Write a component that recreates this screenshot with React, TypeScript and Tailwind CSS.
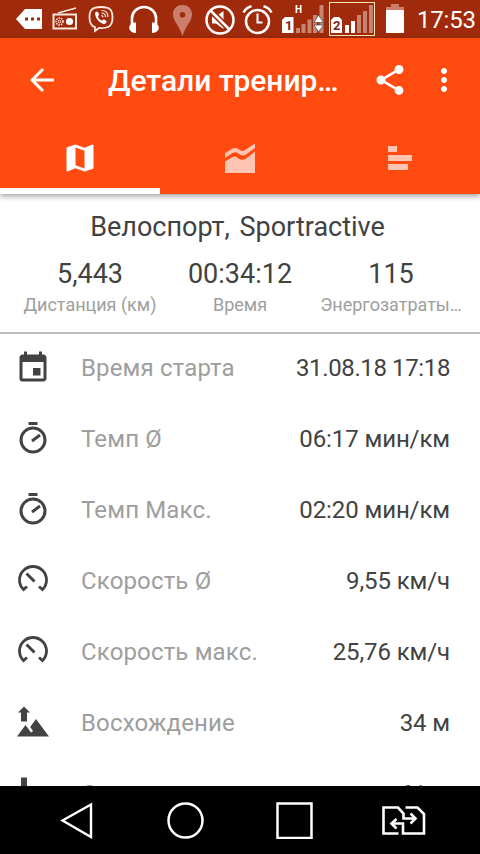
import type { ReactNode } from "react";
import { MdArrowBack, MdEvent, MdMap, MdMoreVert, MdShare } from "react-icons/md";

type Stat = { icon: ReactNode; label: string; value: string; tight?: boolean };

function StopwatchIcon() {
    return (
        <svg width="36" height="36" viewBox="0 0 36 36" fill="none" stroke="#424242">
            <circle cx="18" cy="19" r="12" strokeWidth="3" />
            <path d="M13.5 2.500H22.5" strokeWidth="3" />
            <path d="M17 20L25 14" strokeWidth="3" />
        </svg>
    );
}

function GaugeIcon() {
    return (
        <svg width="36" height="36" viewBox="0 0 36 36" fill="none" stroke="#424242" strokeWidth="2.8">
            <path d="M12 23.500L8.500 26.600A13.500 13.500 0 1 1 27.500 26.600L24 23.500" />
            <path d="M11.500 10.500L19.500 18.500" strokeWidth="3" />
        </svg>
    );
}

function AscentIcon() {
    return (
        <svg width="36" height="36" viewBox="0 0 36 36" fill="#424242">
            <path d="M9 1.500L15 7.500H12V16.500H6V7.500H3Z" />
            <path d="M2 31.500L10.500 20L16 27.500L18 26L15.200 22L21 14L34 31.500Z" />
        </svg>
    );
}

function DescentIcon() {
    return (
        <svg width="36" height="36" viewBox="0 0 36 36" fill="#424242">
            <path d="M9 17L3 11H6V1.500H12V11H15Z" />
            <path d="M2 31.500L10.500 20L16 27.500L18 26L15.200 22L21 14L34 31.500Z" />
        </svg>
    );
}

const stats: Stat[] = [
    { icon: <MdEvent size={36} />, label: "Время старта", value: "31.08.18 17:18", tight: true },
    { icon: <StopwatchIcon />, label: "Темп Ø", value: "06:17 мин/км" },
    { icon: <StopwatchIcon />, label: "Темп Макс.", value: "02:20 мин/км" },
    { icon: <GaugeIcon />, label: "Скорость Ø", value: "9,55 км/ч" },
    { icon: <GaugeIcon />, label: "Скорость макс.", value: "25,76 км/ч" },
    { icon: <AscentIcon />, label: "Восхождение", value: "34 м" },
    { icon: <DescentIcon />, label: "Спуск", value: "61 м" },
];

const summary = [
    { value: "5,443", label: "Дистанция (км)" },
    { value: "00:34:12", label: "Время" },
    { value: "115", label: "Энергозатраты…" },
];

function StatusBar() {
    return (
        <div className="flex h-[38px] shrink-0 items-center bg-[#9f2b0c] pl-4 text-white">
            <svg width="26" height="38" viewBox="0 0 26 38" fill="#fff">
                <path d="M0 19L9 9H26V29H9Z" />
                <path d="M9 17.500h3v3h-3zM15 17.500h3v3h-3zM21 17.500h3v3h-3z" fill="#9f2b0c" />
            </svg>
            <svg className="ml-2.5" width="26" height="38" viewBox="0 0 26 38" fill="none" stroke="#ffe9dc">
                <rect x="1.500" y="14.500" width="22.500" height="14" strokeWidth="2" />
                <path d="M6 13L24 8" strokeWidth="1.500" />
                <circle cx="17.500" cy="21.500" r="3.600" fill="#fff" stroke="none" />
                <circle cx="7.500" cy="21.500" r="3.500" strokeWidth="1.500" strokeDasharray="1.500 1" />
                <circle cx="7.500" cy="21.500" r="1.300" strokeWidth="1" />
            </svg>
            <svg className="ml-2.5" width="26" height="38" viewBox="0 0 26 38" fill="none" stroke="#ffe9dc">
                <path d="M13 7C4 7 1.500 10 1.500 17.500C1.500 23 3 26 7 27.200V31L11 28C21 28.500 24.500 26 24.500 17.500C24.500 10 22 7 13 7Z" strokeWidth="1.800" />
                <path d="M7 13C8 11 9.500 11 10.500 13C11.500 15 10.500 15.500 10 16.500C10.500 18.500 12 20 14 20.500C15.500 18.500 17 19.500 18.500 21C19 22.500 17 24.500 15.500 24C11 22.500 7 18 7 13Z" fill="#fff" stroke="none" />
                <path d="M13.500 10.500C17.500 10.500 20 13 20 17M13.500 13C16 13 17.500 14.500 17.500 17M13.500 15.300L15.300 17" strokeWidth="1.200" />
            </svg>
            <svg className="ml-[15px]" width="30" height="38" viewBox="0 0 30 38" fill="none" stroke="#fff">
                <path d="M3 25V18A12 11 0 0 1 27 18V25" strokeWidth="2.600" />
                <path d="M7 22.500V33C-2 33-2 22.500 7 22.500ZM23 22.500V33C32 33 32 22.500 23 22.500Z" fill="#fff" stroke="none" />
            </svg>
            <svg className="ml-[14px]" width="20" height="38" viewBox="0 0 20 38" fill="#cb7f6b">
                <path fillRule="evenodd" d="M9.500 5C3 5 0 9.500 0 14.500C0 21 6 25 9.500 36C13 25 19 21 19 14.500C19 9.500 16 5 9.500 5ZM9.500 12A2.800 2.800 0 1 1 9.500 17.600A2.800 2.800 0 1 1 9.500 12Z" />
            </svg>
            <svg className="ml-[11px]" width="32" height="38" viewBox="0 0 32 38" fill="none" stroke="#fff">
                <path d="M8 16.500H12L19.500 11V29L12 23.500H8Z" fill="#fff" stroke="none" />
                <path d="M6 10L26 30" stroke="#9f2b0c" strokeWidth="6" />
                <circle cx="16" cy="20" r="13.500" strokeWidth="2.500" />
                <path d="M6.500 10.500L25.500 29.500" strokeWidth="2.500" />
            </svg>
            <svg className="ml-[6px]" width="32" height="38" viewBox="0 0 32 38" fill="none" stroke="#fff" strokeWidth="2.500">
                <circle cx="15.500" cy="21.500" r="11.500" />
                <path d="M15.500 13.500V22.500H20.500" strokeWidth="2" />
                <path d="M1.500 12.500C3 9.500 6 7 9.500 6.200M29.500 12.500C28 9.500 25 7 21.500 6.200" />
            </svg>
            <div className="relative ml-2 h-[38px] w-[42px]">
                <svg width="42" height="38" viewBox="0 0 42 38" fill="#fff">
                    <path d="M3 17H11.500V33H0V20Z" />
                    <path d="M14 28h4v5h-4zM19.500 24h4v9h-4zM25.500 19.500h4v13.500h-4zM31 15h4v18h-4zM37.500 5h4v28h-4z" opacity=".42" />
                    <path d="M32 22.500L36.500 15L41.500 22.500ZM32 25L36.500 32L41.500 25Z" stroke="#555" strokeWidth=".8" />
                </svg>
                <span className="absolute top-[5px] left-[13px] text-[10px] leading-[10px] font-bold">H</span>
                <span className="absolute top-[19px] left-[3px] text-[13px] leading-[13px] font-bold text-[#7a2410]">1</span>
            </div>
            <div className="relative ml-[5px] h-[34px] w-[46px] border border-[#ffe9b8]">
                <svg width="44" height="32" viewBox="0 0 44 32">
                    <path d="M4 14H9L12 17V30H1V17Z" fill="#fff" />
                    <path d="M15 22h4v8h-4zM21 18h4v12h-4z" fill="#fff" />
                    <path d="M27 12h4v18h-4zM33 8h4v22h-4zM39 2h4v28h-4z" fill="#fff" opacity=".42" />
                </svg>
                <span className="absolute top-[16px] left-[3px] text-[13px] leading-[13px] font-bold text-[#7a2410]">2</span>
            </div>
            <svg className="ml-[11px]" width="18" height="38" viewBox="0 0 18 38">
                <path d="M5 4H13V7H18V11H0V7H5Z" fill="#cb7f6b" />
                <path d="M0 10H18V33H0Z" fill="#fff" />
            </svg>
            <span className="ml-[13px] pt-[2px] text-[24px] leading-6 tracking-[-0.2px] whitespace-nowrap">17:53</span>
        </div>
    );
}

function Header() {
    return (
        <header className="relative z-10 shrink-0 bg-[#ff4a10] text-white shadow-[0_2px_6px_rgba(0,0,0,0.4)]">
            <div className="flex h-[84px] items-center pl-6">
                <MdArrowBack size={36} />
                <h1 className="ml-12 w-[240px] pt-px text-[30px] leading-9 font-medium tracking-[-0.05px] whitespace-nowrap">Детали тренир…</h1>
                <MdShare size={36} className="ml-6" />
                <MdMoreVert size={36} className="ml-[18px]" />
            </div>
            <div className="grid h-[72px] grid-cols-3">
                <div className="flex justify-center border-b-[6px] border-white pt-[18px]">
                    <MdMap size={36} />
                </div>
                <div className="flex justify-center pt-[18px]">
                    <svg width="36" height="36" viewBox="0 0 36 36" fill="#ffc4b2">
                        <path d="M3 13L10 9Q13.500 7 17 9.500Q20 12 23 10L33 3.500V8L24 14.500Q20 17 16.500 13.500Q13.500 11.500 10.500 13L3 18Z" />
                        <path d="M3 21.500L10.500 17Q13.500 15.500 16.500 18.500Q20 21 24 18.500L33 11.500V33H3Z" />
                    </svg>
                </div>
                <div className="flex justify-center pt-[18px]">
                    <svg width="36" height="36" viewBox="0 0 36 36" fill="#ffc4b2">
                        <path d="M6 6h9v6h-9zM6 15h24v6h-24zM6 24h20v6h-20z" />
                    </svg>
                </div>
            </div>
        </header>
    );
}

function NavBar() {
    return (
        <nav className="flex h-[68px] shrink-0 items-center bg-black pl-[60px]">
            <svg width="34" height="38" viewBox="0 0 34 38" fill="none" stroke="#fff" strokeWidth="2.400">
                <path d="M2.500 19.500L31 3.500V36Z" />
            </svg>
            <svg className="ml-[72px]" width="39" height="38" viewBox="0 0 39 38" fill="none" stroke="#fff" strokeWidth="2.500">
                <circle cx="19.500" cy="19.500" r="17" />
            </svg>
            <svg className="ml-[71px]" width="38" height="38" viewBox="0 0 38 38" fill="none" stroke="#fff" strokeWidth="2.500">
                <path d="M1.500 2.500H35.500V37H1.500Z" />
            </svg>
            <svg className="ml-[67px]" width="45" height="38" viewBox="0 0 45 38" fill="none" stroke="#fff" strokeWidth="2.600">
                <path d="M17.500 32.500H2.500V6.500H17L22.500 12.500V17.500H34" />
                <path d="M24.500 6.500H36.500L43 13V32.500H22V22.500H11" />
                <path d="M29.500 12.500L34.500 17.500L29.500 22.500M15.500 18L10.500 22.500L15.500 27.500" />
            </svg>
        </nav>
    );
}

export default function App() {
    return (
        <div className="flex h-[854px] w-[480px] flex-col overflow-hidden bg-white font-[Roboto,sans-serif] text-[#424242]">
            <StatusBar />
            <Header />

            <section className="h-[140px] shrink-0 border-b-2 border-[#bdbdbd] px-4 pt-[17px]">
                <h2 className="pr-[5px] text-center text-[27px] leading-8 whitespace-nowrap [word-spacing:3px]">Велоспорт, Sportractive</h2>
                <div className="mt-[15px] -ml-px grid grid-cols-[150px_150px_152px] text-center">
                    {summary.map((item) => (
                        <div key={item.label} className="whitespace-nowrap">
                            <p className="text-[27px] leading-8">{item.value}</p>
                            <p className="mt-[3px] text-[18px] leading-6 text-[#9e9e9e]">{item.label}</p>
                        </div>
                    ))}
                </div>
            </section>

            <ul className="min-h-0 flex-1 overflow-hidden">
                {stats.map((stat) => (
                    <li key={stat.label} className="flex h-[71px] items-center pr-[30px] pb-[3px] pl-[15px]">
                        {stat.icon}
                        <span className="ml-[30px] text-[24px] tracking-[0.15px] text-[#9e9e9e]">{stat.label}</span>
                        <span className={`ml-auto text-[24px] ${stat.tight ? "tracking-[-0.38px]" : "tracking-[-0.1px]"}`}>{stat.value}</span>
                    </li>
                ))}
            </ul>

            <NavBar />
        </div>
    );
}
